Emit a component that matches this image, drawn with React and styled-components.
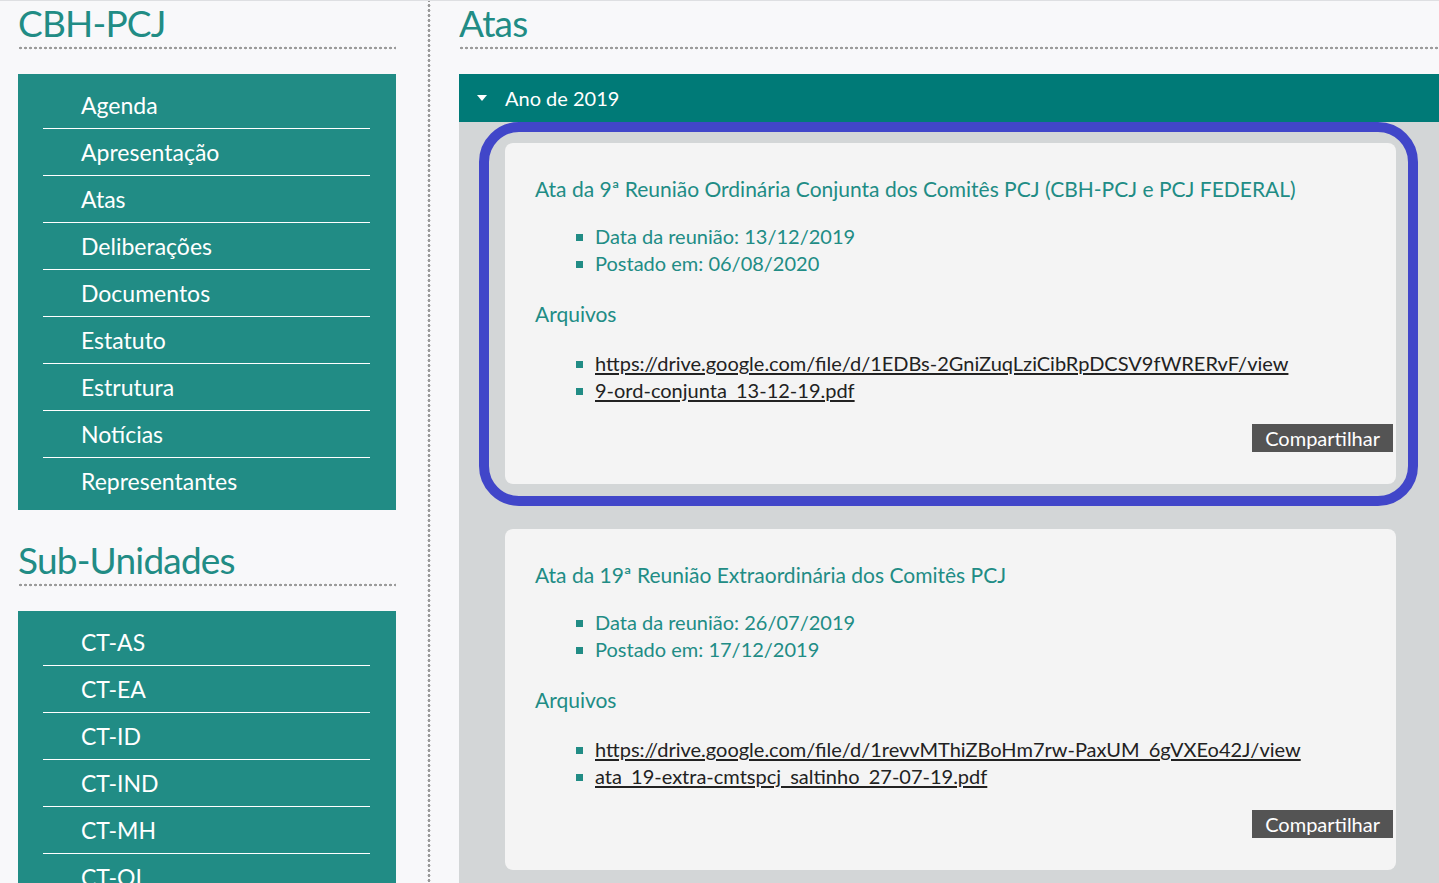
import React from "react";
import styled, { createGlobalStyle } from "styled-components";

const TEAL = "#218c85";
const FONT = `"Lato", "Noto Sans", sans-serif`;

const GlobalStyle = createGlobalStyle`
  html, body {
    margin: 0;
    padding: 0;
    background: #f8f8fa;
    font-family: ${FONT};
  }
  body {
    border-top: 1px solid #dedfe2;
  }
`;

const sidebarMenu = [
  "Agenda",
  "Apresentação",
  "Atas",
  "Deliberações",
  "Documentos",
  "Estatuto",
  "Estrutura",
  "Notícias",
  "Representantes",
];

const subUnits = ["CT-AS", "CT-EA", "CT-ID", "CT-IND", "CT-MH", "CT-OI", "CT-PL", "CT-RN"];

const atas = [
  {
    title: "Ata da 9ª Reunião Ordinária Conjunta dos Comitês PCJ (CBH-PCJ e PCJ FEDERAL)",
    date: "13/12/2019",
    posted: "06/08/2020",
    files: [
      "https://drive.google.com/file/d/1EDBs-2GniZuqLziCibRpDCSV9fWRERvF/view",
      "9-ord-conjunta_13-12-19.pdf",
    ],
    highlighted: true,
  },
  {
    title: "Ata da 19ª Reunião Extraordinária dos Comitês PCJ",
    date: "26/07/2019",
    posted: "17/12/2019",
    files: [
      "https://drive.google.com/file/d/1revvMThiZBoHm7rw-PaxUM_6gVXEo42J/view",
      "ata_19-extra-cmtspcj_saltinho_27-07-19.pdf",
    ],
  },
];

const App = () => {
  return (
    <>
      <GlobalStyle />
      <Page>
        <Sidebar>
          <Heading>CBH-PCJ</Heading>
          <Dots />
          <Menu>
            {sidebarMenu.map((item, i) => (
              <MenuItem key={item} last={i === sidebarMenu.length - 1}>
                {item}
              </MenuItem>
            ))}
          </Menu>

          <Heading spaced>Sub-Unidades</Heading>
          <Dots />
          <Menu>
            {subUnits.map((item, i) => (
              <MenuItem key={item} last={i === subUnits.length - 1}>
                {item}
              </MenuItem>
            ))}
          </Menu>
        </Sidebar>

        <Divider />

        <Content>
          <Heading>Atas</Heading>
          <Dots />
          <AccordionHeader>
            <Caret />
            Ano de 2019
          </AccordionHeader>
          <AccordionBody>
            {atas.map((ata) => (
              <CardWrap key={ata.title}>
                <Card>
                  <CardTitle>{ata.title}</CardTitle>
                  <InfoList gap={23}>
                    <InfoItem>Data da reunião: {ata.date}</InfoItem>
                    <InfoItem>Postado em: {ata.posted}</InfoItem>
                  </InfoList>
                  <SubTitle>Arquivos</SubTitle>
                  <InfoList gap={20}>
                    {ata.files.map((f) => (
                      <InfoItem key={f}>
                        <FileLink href="#">{f}</FileLink>
                      </InfoItem>
                    ))}
                  </InfoList>
                  <ShareButton>Compartilhar</ShareButton>
                </Card>
                {ata.highlighted && <Highlight />}
              </CardWrap>
            ))}
          </AccordionBody>
        </Content>
      </Page>
    </>
  );
};

export default App;

const Page = styled.div`
  display: flex;
  align-items: stretch;
  min-height: 100vh;
  padding-left: 18px;
`;

const Sidebar = styled.aside`
  width: 378px;
  flex-shrink: 0;
`;

const Divider = styled.div`
  width: 4px;
  margin: 0 28px 0 31px;
  flex-shrink: 0;
  background: radial-gradient(circle, #9a9a9a 1.2px, transparent 1.7px) 0 2px / 4px 5px repeat-y;
`;

const Content = styled.main`
  flex: 1;
  min-width: 0;
`;

const Heading = styled.h1`
  margin: ${(props) => (props.spaced ? "28px" : "0")} 0 0;
  font-size: 37px;
  line-height: 43px;
  letter-spacing: -0.8px;
  font-weight: 400;
  color: ${TEAL};
  height: 45px;
  overflow: hidden;
`;

const Dots = styled.div`
  height: 4px;
  margin-bottom: 24px;
  background: radial-gradient(circle, #9a9a9a 1.1px, transparent 1.6px) 0 0 / 5px 4px repeat-x;
`;

const Menu = styled.ul`
  list-style: none;
  margin: 0;
  padding: 8px 26px 6px 25px;
  background: ${TEAL};
`;

const MenuItem = styled.li`
  height: 46px;
  line-height: 46px;
  padding-left: 38px;
  font-size: 23px;
  color: #fff;
  border-bottom: ${(props) => (props.last ? "none" : "1px solid #fff")};
`;

const AccordionHeader = styled.div`
  display: flex;
  align-items: center;
  height: 48px;
  padding-left: 18px;
  background: #007a77;
  color: #fff;
  font-size: 20px;
`;

const Caret = styled.span`
  width: 0;
  height: 0;
  margin-right: 18px;
  border-left: 5px solid transparent;
  border-right: 5px solid transparent;
  border-top: 6px solid #fff;
`;

const AccordionBody = styled.div`
  background: #d3d6d7;
  padding: 21px 43px 40px 46px;
  display: flex;
  flex-direction: column;
  gap: 45px;
`;

const CardWrap = styled.div`
  position: relative;
`;

const Card = styled.article`
  display: flex;
  flex-direction: column;
  background: #f4f4f4;
  border-radius: 8px;
  padding: 32px 3px 32px 30px;
`;

const Highlight = styled.div`
  position: absolute;
  top: -21px;
  left: -26px;
  right: -22px;
  bottom: -22px;
  border: 10px solid #4146c9;
  border-radius: 40px;
  pointer-events: none;
`;

const CardTitle = styled.h2`
  margin: 0 0 21px;
  font-size: 21px;
  line-height: 27px;
  font-weight: 400;
  color: ${TEAL};
`;

const SubTitle = styled.h3`
  margin: 0 0 23px;
  font-size: 21px;
  line-height: 27px;
  font-weight: 400;
  color: ${TEAL};
`;

const InfoList = styled.ul`
  list-style: none;
  margin: 0 0 ${(props) => props.gap}px;
  padding: 0 0 0 60px;
`;

const InfoItem = styled.li`
  position: relative;
  font-size: 20px;
  line-height: 27px;
  color: ${TEAL};

  &::before {
    content: "";
    position: absolute;
    left: -19px;
    top: 11px;
    width: 7px;
    height: 7px;
    background: ${TEAL};
  }
`;

const FileLink = styled.a`
  color: #222;
  text-decoration: underline;
  text-underline-offset: 2px;
`;

const ShareButton = styled.button`
  align-self: flex-end;
  height: 28px;
  padding: 0 13px;
  border: none;
  background: #545454;
  color: #fff;
  font-family: ${FONT};
  font-size: 20px;
  line-height: 28px;
  cursor: pointer;
`;
